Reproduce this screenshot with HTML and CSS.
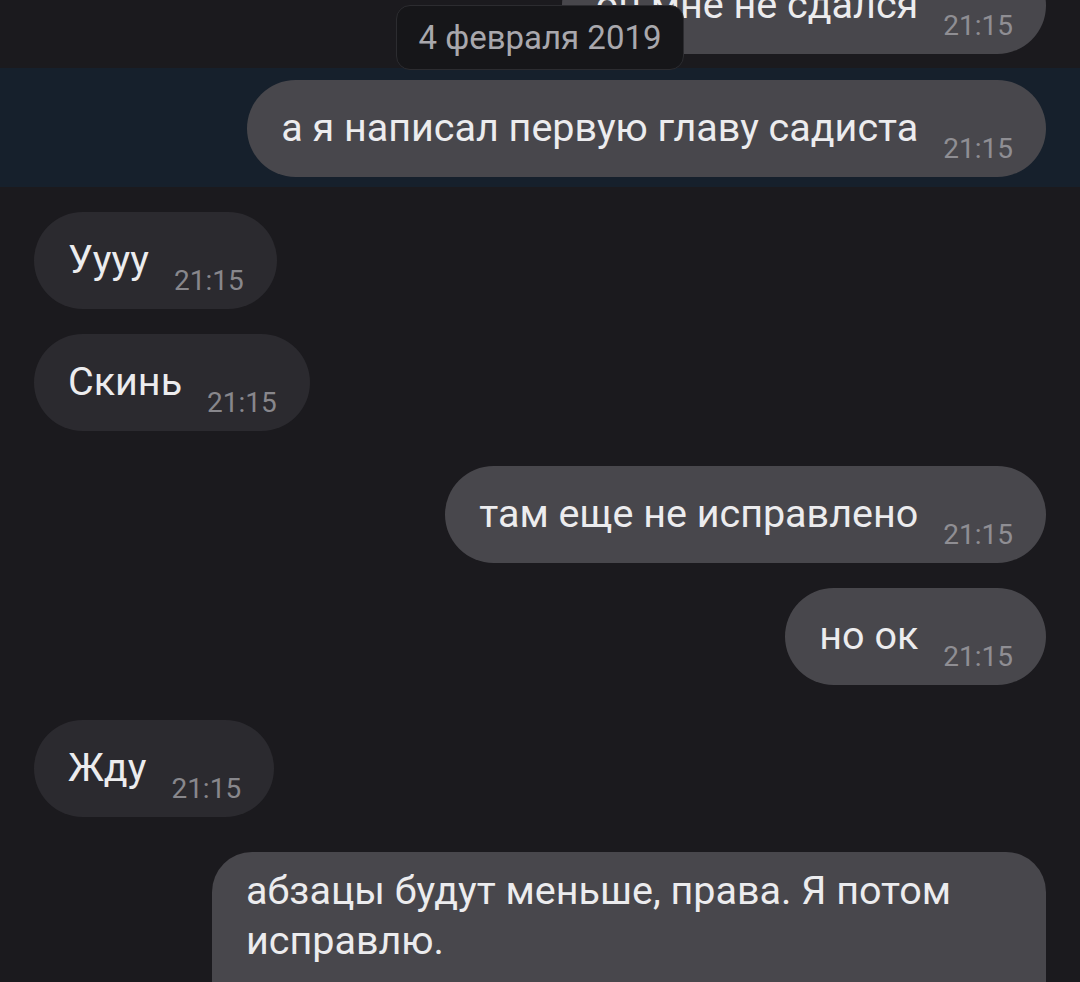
FILE: index.html
```html
<!DOCTYPE html>
<html lang="ru">
<head>
<meta charset="utf-8">
<link rel="stylesheet" href="styles.css">
</head>
<body>
<div class="chat">
  <div class="row out first">
    <div class="bubble mine"><span class="text">он мне не сдался</span><span class="time">21:15</span></div>
  </div>
  <div class="band">
    <div class="row out">
      <div class="bubble mine"><span class="text">а я написал первую главу садиста</span><span class="time">21:15</span></div>
    </div>
  </div>
  <div class="row in gap-big">
    <div class="bubble theirs"><span class="text">Уууу</span><span class="time">21:15</span></div>
  </div>
  <div class="row in gap-small">
    <div class="bubble theirs"><span class="text">Скинь</span><span class="time">21:15</span></div>
  </div>
  <div class="row out gap-big">
    <div class="bubble mine"><span class="text">там еще не исправлено</span><span class="time">21:15</span></div>
  </div>
  <div class="row out gap-small">
    <div class="bubble mine"><span class="text">но ок</span><span class="time">21:15</span></div>
  </div>
  <div class="row in gap-big">
    <div class="bubble theirs"><span class="text">Жду</span><span class="time">21:15</span></div>
  </div>
  <div class="row out gap-big">
    <div class="bubble mine multi"><span class="text">абзацы будут меньше, права. Я потом исправлю.</span><span class="time">21:15</span></div>
  </div>
  <div class="date-pill">4 февраля 2019</div>
</div>
</body>
</html>
```

FILE: styles.css
```css
html, body {
  margin: 0;
  padding: 0;
  background: #1b1a1e;
}
body {
  width: 1080px;
  height: 982px;
  overflow: hidden;
  font-family: Roboto, "Noto Sans", sans-serif;
}
.chat {
  position: relative;
  display: flex;
  flex-direction: column;
}
.row {
  display: flex;
  padding: 0 34px;
}
.row.out { justify-content: flex-end; }
.row.in { justify-content: flex-start; }
.row.first { margin-top: -43px; }
.gap-small { margin-top: 25px; }
.gap-big { margin-top: 35px; }
.band {
  margin-top: 14px;
  background: #16202c;
  padding: 12px 0 10px;
}
.band + .gap-big { margin-top: 25px; }
.bubble {
  display: flex;
  align-items: flex-end;
  gap: 25px;
  height: 97px;
  box-sizing: border-box;
  padding: 22px 33px 14px 34px;
  border-radius: 49px;
}
.bubble.mine { background: #48474c; }
.bubble.theirs { background: #2b2a2f; }
.text {
  font-size: 39.5px;
  line-height: 50px;
  color: #ececee;
  margin-bottom: 10px;
  white-space: nowrap;
}
.time {
  font-size: 28px;
  line-height: 28px;
  color: #88878c;
  white-space: nowrap;
}
.bubble.mine .time { color: #8f8e93; }
.bubble.multi {
  display: block;
  width: 834px;
  height: auto;
  padding: 14px 33px 20px 34px;
  border-radius: 40px;
}
.bubble.multi .text {
  display: block;
  white-space: normal;
  margin-bottom: 0;
}
.bubble.multi .time {
  display: block;
  text-align: right;
  margin-top: 24px;
}
.date-pill {
  position: absolute;
  left: 396px;
  top: 5px;
  width: 288px;
  height: 65px;
  box-sizing: border-box;
  background: #161619;
  border: 1px solid #2c2c30;
  border-radius: 14px;
  color: #a9a8ad;
  font-size: 33px;
  display: flex;
  align-items: center;
  justify-content: center;
}
```
